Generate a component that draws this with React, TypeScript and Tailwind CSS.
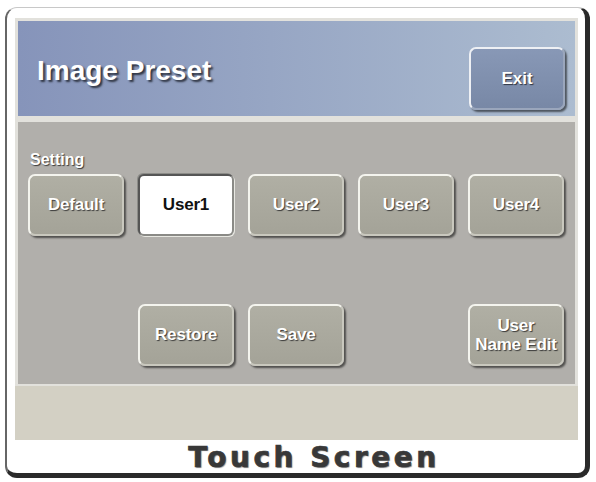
import React, { useState } from 'react';

const PRESETS = ['Default', 'User1', 'User2', 'User3', 'User4'];

const raised =
  'rounded-[7px] border-2 border-t-[#f4f4ee] border-l-[#f4f4ee] border-r-[#c9c8be] border-b-[#c9c8be] bg-gradient-to-b from-[#b0afa4] to-[#a4a398] shadow-[2px_2px_2px_rgba(0,0,0,0.55)] text-white [text-shadow:1px_1px_1px_#3a3a3a]';

const pressed =
  'rounded-[6px] border-2 border-t-[#555] border-l-[#555] border-r-[#8a8a86] border-b-[#8a8a86] bg-white text-[#111] shadow-[1px_1px_0_#e8e8e2,-1px_-1px_0_#8c8c88]';

const PanelButton: React.FC<{ label: React.ReactNode; active?: boolean; onClick?: () => void }> = ({
  label,
  active,
  onClick,
}) => (
  <button
    onClick={onClick}
    className={`h-[62px] w-[96px] flex items-center justify-center text-center text-[17px] font-bold leading-[20px] tracking-[-0.2px] ${
      active ? pressed : raised
    }`}
  >
    {label}
  </button>
);

export default function App() {
  const [preset, setPreset] = useState('User1');

  return (
    <div className="min-h-[482px] bg-white pl-[5px] pt-[7px] font-['Liberation_Sans',Arial,sans-serif]">
      <div className="w-[585px] h-[471px] rounded-[12px] border-t border-l-2 border-r-[5px] border-b-[5px] border-t-[#c8c8c8] border-l-[#666] border-r-[#2a2a2a] border-b-[#2a2a2a] bg-white flex flex-col">
        <div className="mt-[10px] ml-[8px] w-[563px] bg-[#e2e1dc] px-[3px] pt-[3px] pb-[2px] flex flex-col gap-[6px]">
          {/* title bar */}
          <div className="h-[95px] bg-gradient-to-r from-[#8694ba] to-[#acbcd0] flex justify-between pl-[19px] pr-[10px] pb-[6px]">
            <h1 className="self-center mt-[11px] text-[28px] font-bold text-white [text-shadow:2px_2px_2px_#2e3442]">
              Image Preset
            </h1>
            <button className="self-end h-[63px] w-[96px] rounded-[7px] border-2 border-t-[#eef0f4] border-l-[#eef0f4] border-r-[#9aa6bc] border-b-[#9aa6bc] bg-gradient-to-b from-[#8898b6] to-[#7888a6] shadow-[2px_2px_2px_rgba(0,0,0,0.55)] text-[17px] font-bold text-white [text-shadow:1px_1px_1px_#2e3442]">
              Exit
            </button>
          </div>

          {/* settings panel */}
          <div className="h-[262px] bg-[#b1afab] pl-[10px] pt-[29px]">
            <div className="pl-[2px] text-[16px] font-bold leading-[18px] text-white [text-shadow:1px_1px_1px_#3a3a3a]">
              Setting
            </div>
            <div className="mt-[5px] grid grid-cols-[repeat(5,96px)] gap-x-[14px] gap-y-[68px]">
              {PRESETS.map(p => (
                <PanelButton key={p} label={p} active={preset === p} onClick={() => setPreset(p)} />
              ))}
              <div />
              <PanelButton label="Restore" />
              <PanelButton label="Save" />
              <div />
              <PanelButton
                label={
                  <span className="block leading-[19px]">
                    User
                    <br />
                    Name Edit
                  </span>
                }
              />
            </div>
          </div>
        </div>

        {/* message strip */}
        <div className="ml-[8px] w-[563px] h-[54px] bg-[#d3d0c4]" />

        <div className="h-[33px] pt-[2px] pl-[36px] text-center font-['DejaVu_Sans',sans-serif] text-[28px] font-bold leading-[32px] tracking-[3.5px] text-[#383838] [-webkit-text-stroke:0.7px_#383838] [text-shadow:1px_1px_1px_#8a8a8a]">
          Touch Screen
        </div>
      </div>
    </div>
  );
}
